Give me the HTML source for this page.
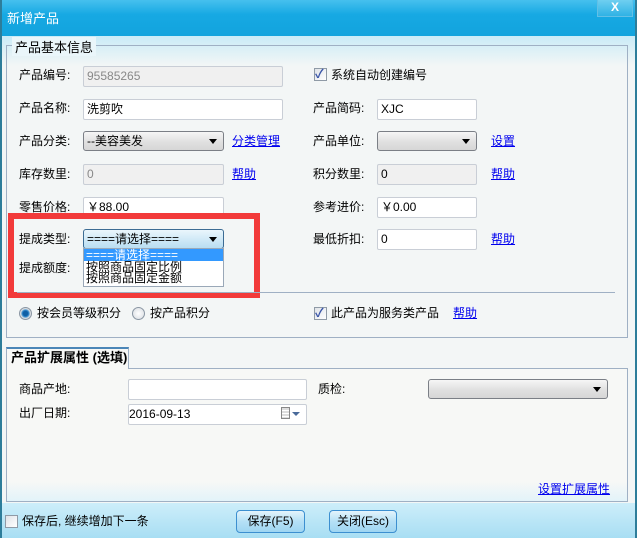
<!DOCTYPE html>
<html><head><meta charset="utf-8"><style>
*{margin:0;padding:0;box-sizing:border-box}
body{width:637px;height:538px;overflow:hidden;font:12px "Liberation Sans","Noto Sans CJK SC",sans-serif;color:#000;position:relative;background:#f3f6f6}
.a{position:absolute;white-space:nowrap}
.lbl{position:absolute;line-height:16px}
.in{position:absolute;height:21px;border:1px solid #c9ced6;background:#fff;padding-left:3px;line-height:19px;border-radius:2px}
.g{background:#f0f0f0;color:#888}
.lk{position:absolute;color:#0000ee;text-decoration:underline;line-height:16px}
.sel{position:absolute;height:20px;border:1px solid #7b7f86;border-radius:3px;background:linear-gradient(#f6f6f6,#e0e0e0 55%,#d6d6d6)}
.sel:after{content:"";position:absolute;right:6px;top:7px;border:4px solid transparent;border-top:5px solid #000}
.cb{position:absolute;width:13px;height:13px;border:1px solid #8f9aa6;background:linear-gradient(135deg,#dfe3e8,#fff)}
.rd{position:absolute;width:13px;height:13px;border-radius:50%;border:1px solid #8a96a3;background:radial-gradient(#fff,#d6dbe0)}
.btn{position:absolute;height:23px;border:1px solid #3c8fd0;border-radius:4px;background:linear-gradient(#e4f4fc,#b5e0f6 50%,#9fd6f2);text-align:center;line-height:21px}
</style></head><body>
<div class="a" style="left:0;top:0;width:637px;height:36px;background:linear-gradient(#46c0ee,#17a9e3 40%,#12a3dd)"></div>
<div class="a" style="left:7px;top:8px;color:#fff;font-size:13px">新增产品</div>
<div class="a" style="left:597px;top:0;width:36px;height:17px;background:linear-gradient(#6fcff0,#2fb2e5);border:1px solid #62c0e6;border-top:none;color:#fff;font-weight:bold;text-align:center;line-height:15px;font-size:12px">X</div>
<div class="a" style="left:0;top:36px;width:637px;height:30px;background:linear-gradient(#c9ebf7,#f3f6f6)"></div>
<div class="a" style="left:0;top:0;width:2px;height:538px;background:#2d7d9a"></div>
<div class="a" style="left:635px;top:0;width:2px;height:538px;background:#2d7d9a"></div>

<div class="a" style="left:6px;top:45px;width:622px;height:293px;border:1px solid #9fb0c4"></div>
<div class="a" style="left:12px;top:37px;padding:0 3px;background:#eaf6fa;font-size:13px">产品基本信息</div>

<div class="lbl" style="left:19px;top:67px">产品编号:</div>
<div class="in g" style="left:83px;top:66px;width:200px">95585265</div>
<div class="cb" style="left:314px;top:68px"></div><div class="a" style="left:315px;top:65px;color:#3a56a8;font-weight:bold">✓</div>
<div class="lbl" style="left:331px;top:67px">系统自动创建编号</div>

<div class="lbl" style="left:19px;top:100px">产品名称:</div>
<div class="in" style="left:83px;top:99px;width:200px">洗剪吹</div>
<div class="lbl" style="left:313px;top:100px">产品简码:</div>
<div class="in" style="left:377px;top:99px;width:100px">XJC</div>

<div class="lbl" style="left:19px;top:133px">产品分类:</div>
<div class="sel" style="left:83px;top:131px;width:141px;padding-left:3px;line-height:18px">--美容美发</div>
<div class="lk" style="left:232px;top:133px">分类管理</div>
<div class="lbl" style="left:313px;top:133px">产品单位:</div>
<div class="sel" style="left:377px;top:131px;width:100px"></div>
<div class="lk" style="left:491px;top:133px">设置</div>

<div class="lbl" style="left:19px;top:166px">库存数里:</div>
<div class="in g" style="left:83px;top:164px;width:141px">0</div>
<div class="lk" style="left:232px;top:166px">帮助</div>
<div class="lbl" style="left:313px;top:166px">积分数里:</div>
<div class="in g" style="left:377px;top:164px;width:100px;color:#000">0</div>
<div class="lk" style="left:491px;top:166px">帮助</div>

<div class="lbl" style="left:19px;top:199px">零售价格:</div>
<div class="in" style="left:83px;top:197px;width:141px">￥88.00</div>
<div class="lbl" style="left:313px;top:199px">参考进价:</div>
<div class="in" style="left:377px;top:197px;width:100px">￥0.00</div>

<div class="a" style="left:8px;top:213px;width:252px;height:85px;border:6px solid #f23a3a"></div>
<div class="a" style="left:17px;top:292px;width:598px;height:1px;background:#9fb0c4"></div>
<div class="lbl" style="left:19px;top:231px">提成类型:</div>
<div class="sel" style="left:83px;top:229px;width:141px;border-color:#3c6c94;background:linear-gradient(#eaf6fc,#b9def2);padding-left:3px;line-height:18px">====请选择====</div>
<div class="lbl" style="left:19px;top:260px">提成额度:</div>
<div class="lbl" style="left:313px;top:231px">最低折扣:</div>
<div class="in" style="left:377px;top:229px;width:100px">0</div>
<div class="lk" style="left:491px;top:231px">帮助</div>
<div class="a" style="left:83px;top:248px;width:141px;height:39px;border:1px solid #9aa8b8;background:#fff;line-height:10px"></div>
<div class="a" style="left:84px;top:249px;width:139px;height:12px;background:#3399ff;color:#fff;line-height:12px;padding-left:2px">====请选择====</div>
<div class="a" style="left:86px;top:261px;line-height:12px">按照商品固定比例</div>
<div class="a" style="left:86px;top:272px;line-height:12px">按照商品固定金额</div>

<div class="rd" style="left:19px;top:307px;background:radial-gradient(#0f5fa5 30%,#3a8fd0 45%,#d6dbe0 60%)"></div>
<div class="lbl" style="left:37px;top:305px">按会员等级积分</div>
<div class="rd" style="left:132px;top:307px"></div>
<div class="lbl" style="left:150px;top:305px">按产品积分</div>
<div class="cb" style="left:314px;top:307px"></div><div class="a" style="left:315px;top:304px;color:#3a56a8;font-weight:bold">✓</div>
<div class="lbl" style="left:331px;top:305px">此产品为服务类产品</div>
<div class="lk" style="left:453px;top:305px">帮助</div>

<div class="a" style="left:6px;top:368px;width:622px;height:134px;border:1px solid #9fb0c4;background:linear-gradient(#f7f8f6 85%,#e3f3f9)"></div>
<div class="a" style="left:6px;top:347px;width:123px;height:22px;border:1px solid #9fb0c4;border-top:2px solid #4a86b8;border-bottom:none;background:#f7f8f6;font-weight:bold;padding-left:4px;line-height:18px;font-size:13px">产品扩展属性 (选填)</div>
<div class="lbl" style="left:19px;top:381px">商品产地:</div>
<div class="in" style="left:128px;top:379px;width:179px"></div>
<div class="lbl" style="left:318px;top:381px">质检:</div>
<div class="sel" style="left:428px;top:379px;width:180px"></div>
<div class="lbl" style="left:19px;top:405px">出厂日期:</div>
<div class="in" style="left:128px;top:404px;width:179px;padding-left:0">2016-09-13</div>
<div class="a" style="left:281px;top:407px;width:9px;height:12px;border:1px solid #888;background:repeating-linear-gradient(#ddd 0 2px,#fff 2px 3px)"></div>
<div class="a" style="left:292px;top:412px;border:4px solid transparent;border-top:4px solid #4a6a9a"></div>
<div class="lk" style="left:538px;top:481px">设置扩展属性</div>

<div class="a" style="left:2px;top:503px;width:633px;height:35px;background:linear-gradient(#cdeefa,#a8def3)"></div>
<div class="cb" style="left:5px;top:515px"></div>
<div class="lbl" style="left:22px;top:513px">保存后, 继续增加下一条</div>
<div class="btn" style="left:236px;top:510px;width:69px">保存(F5)</div>
<div class="btn" style="left:329px;top:510px;width:68px">关闭(Esc)</div>
</body></html>
